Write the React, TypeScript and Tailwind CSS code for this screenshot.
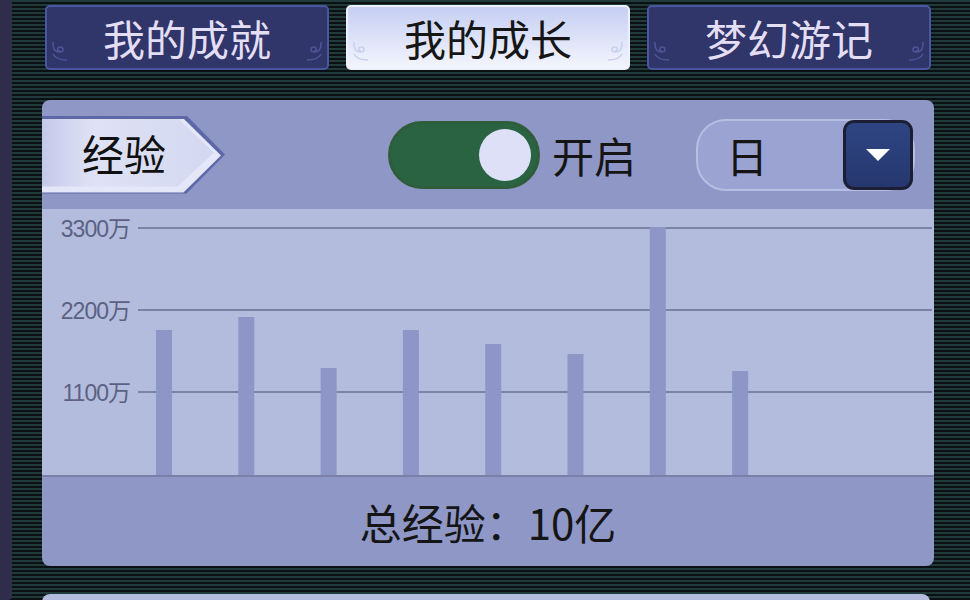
import React from 'react';

const TABS = [
  { label: '我的成就', active: false },
  { label: '我的成长', active: true },
  { label: '梦幻游记', active: false },
];

const GRID_LINES = [
  { label: '3300万', y: 19 },
  { label: '2200万', y: 101 },
  { label: '1100万', y: 183 },
];

// bar tops in chart coordinates (bottom axis at 266)
const BAR_TOPS = [121, 108, 159, 121, 135, 145, 18, 162];

function TabCorner({ side, light }: { side: 'left' | 'right'; light: boolean }) {
  const stroke = light ? '#c9d0ee' : '#4d5699';
  return (
    <svg
      width="18"
      height="22"
      viewBox="0 0 18 22"
      className={`absolute bottom-[6px] ${side === 'left' ? 'left-[4px]' : 'right-[4px] -scale-x-100'}`}
    >
      <path d="M2 2 C2 10 4 12 9 12 C13 12 13 7 9 7 C6 7 6 11 9 11" fill="none" stroke={stroke} strokeWidth="1.5" />
      <path d="M2 14 C4 18 8 20 16 20" fill="none" stroke={stroke} strokeWidth="1.5" />
    </svg>
  );
}

function Tab({ label, active }: { label: string; active: boolean }) {
  return (
    <div
      className={`relative flex h-[65px] w-[284px] items-center justify-center rounded-[5px] border-2 text-[42px] ${
        active
          ? 'border-[#eef0fb] bg-[linear-gradient(to_bottom,#c6cff3,#f3f5fd)] text-[#161616]'
          : 'border-[#4c56a0] bg-[#30356a] text-[#e3def4]'
      }`}
    >
      <TabCorner side="left" light={active} />
      <TabCorner side="right" light={active} />
      <span className="leading-none">{label}</span>
    </div>
  );
}

function Chart() {
  return (
    <svg width="892" height="268" viewBox="0 0 892 268" className="block">
      <rect x="0" y="0" width="892" height="268" fill="#b3bcdc" />
      {GRID_LINES.map((g) => (
        <g key={g.label}>
          <line x1="96" x2="890" y1={g.y} y2={g.y} stroke="#7c81a6" strokeWidth="2" />
          <text
            x="88"
            y={g.y + 9}
            textAnchor="end"
            fontSize="23"
            letterSpacing="-1"
            fill="#5c6183"
            fontFamily="'Liberation Sans', 'Noto Sans CJK SC', sans-serif"
          >
            {g.label}
          </text>
        </g>
      ))}
      {BAR_TOPS.map((top, i) => (
        <rect key={i} x={114 + i * 82.3} y={top} width="16" height={266 - top} fill="#8e96c7" />
      ))}
      <line x1="0" x2="892" y1="267" y2="267" stroke="#7b80a6" strokeWidth="2" />
    </svg>
  );
}

export default function App() {
  return (
    <div
      className="relative h-[600px] w-[970px] overflow-hidden bg-[repeating-linear-gradient(to_bottom,#203a3c_0px,#203a3c_2px,#0b1113_2px,#0b1113_4px)]"
      style={{ fontFamily: "'Noto Sans CJK SC', 'Noto Sans', sans-serif" }}
    >
      {/* left edge strip */}
      <div className="absolute left-0 top-0 h-[600px] w-[12px] rounded-r-[4px] bg-[#2f2c4c]" />

      <div className="flex flex-col pl-[42px]">
        {/* tabs */}
        <div className="flex gap-[17px] pl-[3px] pt-[5px]">
          {TABS.map((t) => (
            <Tab key={t.label} label={t.label} active={t.active} />
          ))}
        </div>

        {/* main panel */}
        <div className="mt-[30px] w-[892px] overflow-hidden rounded-[8px] bg-[#8f97c6]">
          {/* header */}
          <div className="flex h-[109px] items-center">
            <div className="h-[78px] w-[183px] bg-[#5e68a6] [clip-path:polygon(0_0,79%_0,100%_50%,79%_100%,0_100%)]">
              <div className="ml-0 mt-[2px] h-[74px] w-[179px] bg-[#e4e7f8] [clip-path:polygon(0_0,79%_0,100%_50%,79%_100%,0_100%)]">
                <div className="ml-0 mt-[3px] flex h-[68px] w-[172px] items-center bg-[linear-gradient(to_right,#c4c9ea,#dfe2f5_30%,#d3d8f1)] pl-[40px] text-[42px] leading-none text-[#111] [clip-path:polygon(0_0,79%_0,100%_50%,79%_100%,0_100%)]">
                  经验
                </div>
              </div>
            </div>

            <div className="ml-[163px] flex h-[68px] w-[152px] items-center justify-end rounded-full border-[3px] border-[#2f5c3a] bg-[#2a6341] pr-[6px]">
              <div className="h-[52px] w-[52px] rounded-full bg-[#dde0f6]" />
            </div>
            <span className="ml-[12px] text-[42px] leading-none text-[#151515]">开启</span>

            <div className="ml-auto mr-[19px] flex h-[72px] w-[219px] items-center rounded-[30px] border-2 border-[#b8bee2] bg-[#9aa3d1]">
              <span className="ml-[28px] text-[42px] leading-none text-[#151515]">日</span>
              <div className="ml-auto flex h-[70px] w-[70px] items-center justify-center rounded-[11px] border-[3px] border-[#1c1f33] bg-[linear-gradient(to_bottom,#2e4583,#26376e)]">
                <svg width="26" height="14" viewBox="0 0 26 14">
                  <path d="M1 1 H25 L13 13 Z" fill="#ffffff" />
                </svg>
              </div>
            </div>
          </div>

          {/* chart */}
          <Chart />

          {/* footer */}
          <div className="flex h-[89px] items-center justify-center text-[42px] leading-none text-[#151515]">
            总经验：10亿
          </div>
        </div>

        {/* next panel peeking */}
        <div className="mt-[28px] h-[40px] w-[888px] rounded-[8px] bg-[#b3bcdc]" />
      </div>
    </div>
  );
}
